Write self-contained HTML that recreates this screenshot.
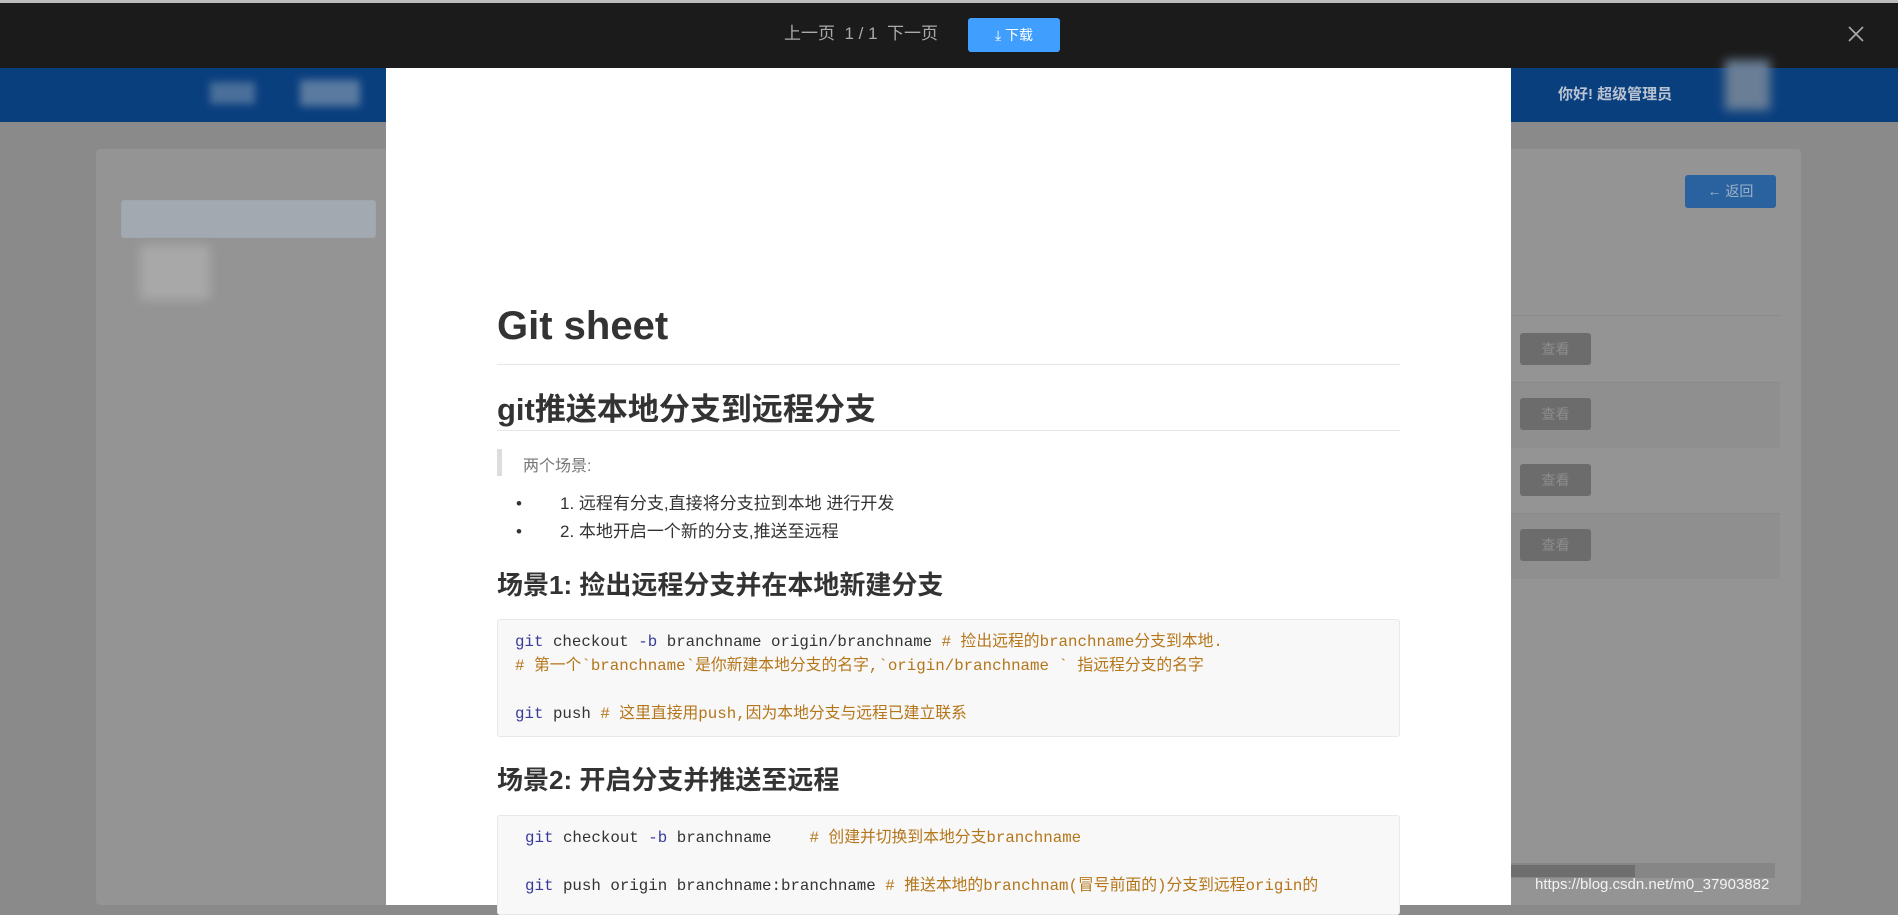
<!DOCTYPE html>
<html><head><meta charset="utf-8"><style>
*{margin:0;padding:0;box-sizing:border-box}
body{width:1898px;height:905px;overflow:hidden;position:relative;background:#8a8a8a;font-family:"Liberation Sans","Noto Sans CJK SC",sans-serif}
.abs{position:absolute}
.top{left:0;top:0;width:1898px;height:68px;background:#1b1b1b;border-top:3px solid #bdbdbd}
.hdr{left:0;top:68px;width:1898px;height:54px;background:#0a3f7e}
.card{left:96px;top:149px;width:1705px;height:756px;background:#949494;border-radius:4px}
.modal{left:386px;top:68px;width:1125px;height:837px;background:#fff}
.mono{font-family:"Liberation Mono","Noto Sans CJK SC",monospace}
.k{color:#3a3a9a}.c{color:#b5761a}.t{color:#333}
.btnv{left:1520px;width:71px;height:32px;background:#6c6c6c;border-radius:3px;color:#8d8d8d;font-size:14px;text-align:center;line-height:32px}
.line{left:1510px;width:270px;height:1px;background:#8a8a8a}
</style></head><body>
<div class="abs top"></div>
<div class="abs" style="left:784px;top:22px;color:#aaa;font-size:17px;line-height:24px">上一页&nbsp; 1 / 1 &nbsp;下一页</div>
<div class="abs" style="left:968px;top:18px;width:92px;height:34px;background:#409eff;border-radius:3px;color:#fff;font-size:14px;line-height:34px;text-align:center">⤓ 下载</div>
<svg class="abs" style="left:1848px;top:26px" width="16" height="16" viewBox="0 0 16 16"><path d="M1 1L15 15M15 1L1 15" stroke="#aaa" stroke-width="1.6"/></svg>
<div class="abs hdr"></div>
<div class="abs" style="left:210px;top:82px;width:45px;height:22px;background:#4a6f9a;filter:blur(4px)"></div>
<div class="abs" style="left:300px;top:80px;width:60px;height:26px;background:#5a7aa0;filter:blur(4px)"></div>
<div class="abs" style="left:1558px;top:83px;color:#b9c3d1;font-size:15px;font-weight:bold">你好! 超级管理员</div>
<div class="abs" style="left:1725px;top:60px;width:45px;height:50px;background:#6a7e96;filter:blur(5px)"></div>
<div class="abs card"></div>
<div class="abs" style="left:121px;top:200px;width:255px;height:38px;background:#a3a9b0;border:1px solid #a0a6ad;border-radius:3px"></div>
<div class="abs" style="left:140px;top:245px;width:70px;height:55px;background:#a8a8a8;filter:blur(5px)"></div>
<div class="abs" style="left:1685px;top:175px;width:91px;height:33px;background:#2a62a0;border-radius:3px;color:#9fb3c8;font-size:14px;line-height:33px;text-align:center">← 返回</div>
<div class="abs line" style="top:315px"></div>
<div class="abs line" style="top:382px"></div>
<div class="abs line" style="top:513px"></div>
<div class="abs" style="left:1510px;top:383px;width:270px;height:65px;background:#8f8f8f"></div>
<div class="abs" style="left:1510px;top:514px;width:270px;height:65px;background:#8f8f8f"></div>
<div class="abs btnv" style="top:333px">查看</div>
<div class="abs btnv" style="top:398px">查看</div>
<div class="abs btnv" style="top:464px">查看</div>
<div class="abs btnv" style="top:529px">查看</div>
<div class="abs" style="left:1510px;top:863px;width:265px;height:15px;background:#868686"></div>
<div class="abs" style="left:1510px;top:865px;width:125px;height:12px;background:#6e6e6e"></div>
<div class="abs" style="left:1535px;top:876px;color:#f2f2f2;font-size:15px">https://blog.csdn.net/m0_37903882</div>
<div class="abs modal"></div>
<div class="abs t" style="left:497px;top:304px;font-size:40px;font-weight:bold">Git sheet</div>
<div class="abs" style="left:497px;top:364px;width:903px;height:1px;background:#e6e6e6"></div>
<div class="abs t" style="left:497px;top:384px;font-size:31px;font-weight:bold">git推送本地分支到远程分支</div>
<div class="abs" style="left:497px;top:430px;width:903px;height:1px;background:#e6e6e6"></div>
<div class="abs" style="left:497px;top:449px;width:5px;height:27px;background:#ddd"></div>
<div class="abs" style="left:523px;top:452px;color:#777;font-size:16px">两个场景:</div>
<div class="abs t" style="left:516px;top:490px;font-size:17px;line-height:28px">•<br>•</div>
<div class="abs t" style="left:560px;top:490px;font-size:17px;line-height:28px">1. 远程有分支,直接将分支拉到本地 进行开发<br>2. 本地开启一个新的分支,推送至远程</div>
<div class="abs t" style="left:497px;top:565px;font-size:26px;font-weight:bold">场景1: 捡出远程分支并在本地新建分支</div>
<div class="abs" style="left:497px;top:619px;width:903px;height:118px;background:#f8f8f8;border:1px solid #e8e8e8;border-radius:3px"></div>
<div class="abs mono" style="left:515px;top:630px;font-size:15.8px;line-height:24px;white-space:pre"><span class="k">git</span> <span class="t">checkout</span> <span class="k">-b</span> <span class="t">branchname origin/branchname</span> <span class="c"># 捡出远程的branchname分支到本地.</span>
<span class="c"># 第一个`branchname`是你新建本地分支的名字,`origin/branchname ` 指远程分支的名字</span>

<span class="k">git</span> <span class="t">push</span> <span class="c"># 这里直接用push,因为本地分支与远程已建立联系</span></div>
<div class="abs t" style="left:497px;top:760px;font-size:26px;font-weight:bold">场景2: 开启分支并推送至远程</div>
<div class="abs" style="left:497px;top:815px;width:903px;height:100px;background:#f8f8f8;border:1px solid #e8e8e8;border-radius:3px"></div>
<div class="abs mono" style="left:525px;top:826px;font-size:15.8px;line-height:24px;white-space:pre"><span class="k">git</span> <span class="t">checkout</span> <span class="k">-b</span> <span class="t">branchname</span>    <span class="c"># 创建并切换到本地分支branchname</span>

<span class="k">git</span> <span class="t">push origin branchname:branchname</span> <span class="c"># 推送本地的branchnam(冒号前面的)分支到远程origin的</span></div>
</body></html>
